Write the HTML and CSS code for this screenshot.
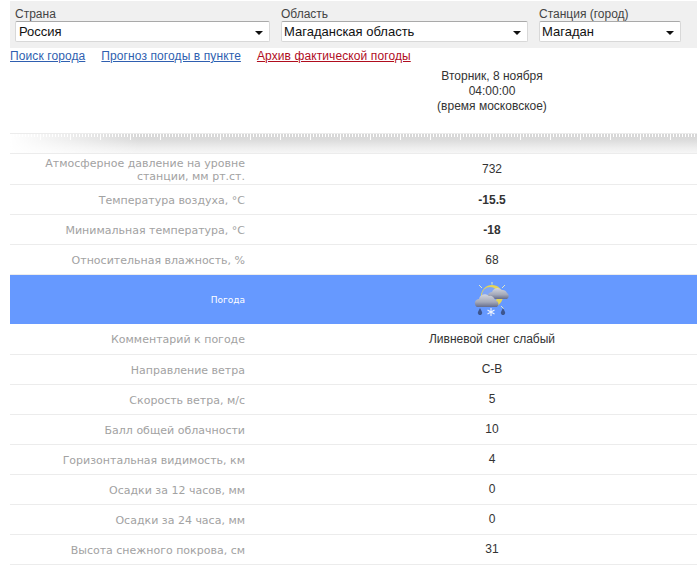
FILE: index.html
```html
<!DOCTYPE html>
<html lang="ru">
<head>
<meta charset="utf-8">
<title>Архив фактической погоды</title>
<link rel="stylesheet" href="styles.css">
</head>
<body>
<div class="filters">
  <div class="field f1"><label>Страна</label><div class="sel">Россия</div></div>
  <div class="field f2"><label>Область</label><div class="sel">Магаданская область</div></div>
  <div class="field f3"><label>Станция (город)</label><div class="sel">Магадан</div></div>
</div>
<nav class="links">
  <a href="#">Поиск города</a>
  <a href="#">Прогноз погоды в пункте</a>
  <a href="#" class="active">Архив фактической погоды</a>
</nav>
<div class="head">
  <div class="label"></div>
  <div class="when">Вторник, 8 ноября<br>04:00:00<br>(время московское)</div>
</div>
<div class="ruler"></div>
<div class="rows">
  <div class="row first"><div class="label tight">Атмосферное давление на уровне станции, мм рт.ст.</div><div class="val">732</div></div>
  <div class="row up"><div class="label">Температура воздуха, °С</div><div class="val b">-15.5</div></div>
  <div class="row up"><div class="label">Минимальная температура, °С</div><div class="val b">-18</div></div>
  <div class="row up"><div class="label">Относительная влажность, %</div><div class="val">68</div></div>
  <div class="row blue"><div class="label">Погода</div><div class="val">
    <svg class="wx" width="36" height="36" viewBox="0 0 36 36">
      <defs>
        <linearGradient id="cloud" x1="0" y1="0" x2="0" y2="1">
          <stop offset="0" stop-color="#d3d6de"/>
          <stop offset="0.6" stop-color="#a4a9ba"/>
          <stop offset="1" stop-color="#646c8c"/>
        </linearGradient>
      </defs>
      <g stroke="#dfe6c8" stroke-width="1"><path d="M18 0v2.500M5 3l3 3M31 3l-3 3M27 24l3 3"/></g>
      <circle cx="18" cy="14" r="11" fill="#e6d557"/>
      <circle cx="16" cy="13" r="8" fill="#7fa5f5"/>
      <path d="M14 15a4 4 0 0 1 4-5a6 6 0 0 1 10-2a5 5 0 0 1 5 3a3.500 3.500 0 0 1 0 6H17a3 3 0 0 1-3-2z" fill="url(#cloud)"/>
      <path d="M1 22a4 4 0 0 1 4-5a6 6 0 0 1 10-3a5 5 0 0 1 6 4a4 4 0 0 1 2 7H5a3.500 3.500 0 0 1-4-3z" fill="url(#cloud)"/>
      <path d="M6 26l1.800 3.500a2.200 2.200 0 1 1-3.600 0z" fill="#3d568f"/>
      <path d="M29 26l1.800 3.500a2.200 2.200 0 1 1-3.600 0z" fill="#3d568f"/>
      <path d="M17 26v8M13.500 28l7 4M20.500 28l-7 4" stroke="#eef3ff" stroke-width="1.100"/>
    </svg>
  </div></div>
  <div class="row first-after"><div class="label">Комментарий к погоде</div><div class="val">Ливневой снег слабый</div></div>
  <div class="row"><div class="label">Направление ветра</div><div class="val">С-В</div></div>
  <div class="row"><div class="label">Скорость ветра, м/с</div><div class="val">5</div></div>
  <div class="row"><div class="label">Балл общей облачности</div><div class="val">10</div></div>
  <div class="row"><div class="label">Горизонтальная видимость, км</div><div class="val">4</div></div>
  <div class="row"><div class="label">Осадки за 12 часов, мм</div><div class="val">0</div></div>
  <div class="row"><div class="label">Осадки за 24 часа, мм</div><div class="val">0</div></div>
  <div class="row"><div class="label">Высота снежного покрова, см</div><div class="val">31</div></div>
</div>
</body>
</html>
```
FILE: styles.css
```css
* { box-sizing: border-box; }
html, body { margin: 0; padding: 0; background: #fff; overflow: hidden; }
body { width: 697px; height: 580px; padding: 1px 0 0 10px; font: 12px/15px "Liberation Sans", Arial, sans-serif; color: #333; }

.filters { display: flex; height: 47px; background: #f0f0f0; padding: 6px 16px 0 5px; }
.field { display: flex; flex-direction: column; margin-right: 11px; }
.field.f1 { width: 255px; }
.field.f2 { width: 247px; }
.field.f3 { width: 142px; margin-right: 0; }
.field label { height: 14px; line-height: 14px; color: #444; }
.sel { position: relative; height: 21px; background: #fff; border: 1px solid #d8d8d8; border-top-color: #a9a9a9; border-radius: 2px; padding-left: 2px; font-size: 13px; line-height: 20px; color: #111; }
.f1 .sel { padding-left: 3px; }
.sel::after { content: ""; position: absolute; right: 6px; top: 9px; border: 4px solid transparent; border-top: 4px solid #111; border-bottom: 0; }

.links { display: flex; gap: 16px; height: 16px; line-height: 16px; letter-spacing: 0.1px; }
.links a { color: #2f5fb0; text-decoration: underline; }
.links a.active { color: #b00d1e; }

.head { display: flex; height: 69px; }
.when { flex: 1; padding-left: 42px; text-align: center; padding-top: 5px; }
.label { width: 235px; flex: none; text-align: right; font-family: "DejaVu Sans", Verdana, sans-serif; font-size: 11px; line-height: 13px; color: #a2a2a2; }

.ruler { height: 21px; border-top: 1px solid #ececec; border-bottom: 1px solid #ececec;
  background:
    repeating-linear-gradient(90deg, #fff 0 1px, rgba(255,255,255,0) 1px 30px) 0 0 / 100% 6px no-repeat,
    repeating-linear-gradient(90deg, #fff 0 1px, rgba(255,255,255,0) 1px 3px) 0 0 / 100% 3px no-repeat,
    linear-gradient(90deg, #fff 0, rgba(255,255,255,0) 130px),
    linear-gradient(#d6d6d6 0, #dcdcdc 6px, #eeeeee 14px, #f6f6f6 19px); }

.rows { display: flex; flex-direction: column; }
.row { display: flex; align-items: center; height: 30px; border-bottom: 1px solid #ececec; }
.row.first { height: 31px; }
.row .label { margin-top: 2px; }
.row.up .val { margin-top: 2px; }
.label.tight { padding-left: 20px; }
.val { flex: 1; padding-left: 42px; text-align: center; }
.val.b { font-weight: bold; }
.row.blue { height: 49px; background: #6699ff; border-bottom: 0; }
.row.blue .label { color: #fff; font-size: 9px; margin-top: 2px; }
.blue .val { display: flex; justify-content: center; }
.row.first-after { height: 31px; }
.row.first-after .label { margin-top: 0; }
.wx { display: block; }
```
